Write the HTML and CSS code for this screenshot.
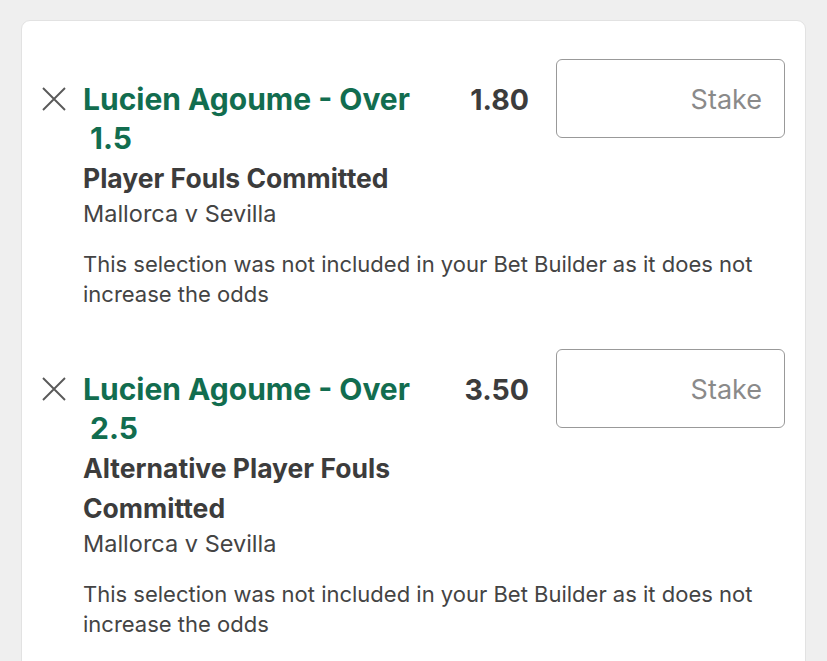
FILE: index.html
```html
<!DOCTYPE html>
<html>
<head>
<meta charset="utf-8">
<link rel="stylesheet" href="styles.css">
</head>
<body>
<div class="card">
  <div class="sel">
    <div class="row">
      <div class="remove"><svg width="24" height="24" viewBox="0 0 24 24"><path d="M1 1 L23 23 M23 1 L1 23" stroke="#595959" stroke-width="1.9" fill="none"/></svg></div>
      <div class="info">
        <div class="title">Lucien Agoume - Over &nbsp;1.5</div>
        <div class="market">Player Fouls Committed</div>
        <div class="event">Mallorca v Sevilla</div>
      </div>
      <div class="odds">1.80</div>
      <div class="stake">Stake</div>
    </div>
    <div class="note">This selection was not included in your Bet Builder as it does not increase the odds</div>
  </div>
  <div class="sel">
    <div class="row">
      <div class="remove"><svg width="24" height="24" viewBox="0 0 24 24"><path d="M1 1 L23 23 M23 1 L1 23" stroke="#595959" stroke-width="1.9" fill="none"/></svg></div>
      <div class="info">
        <div class="title">Lucien Agoume - Over &nbsp;2.5</div>
        <div class="market">Alternative Player Fouls Committed</div>
        <div class="event">Mallorca v Sevilla</div>
      </div>
      <div class="odds">3.50</div>
      <div class="stake">Stake</div>
    </div>
    <div class="note">This selection was not included in your Bet Builder as it does not increase the odds</div>
  </div>
</div>
</body>
</html>
```
FILE: styles.css
```css
html, body {
  margin: 0;
  padding: 0;
  background: #efefef;
  height: 100%;
  overflow: hidden;
}
body {
  font-family: Inter, "Liberation Sans", sans-serif;
  color: #3c3c3c;
}
.card {
  margin: 20px 0 0 21px;
  width: 785px;
  min-height: 700px;
  background: #fff;
  border: 1px solid #e2e2e2;
  border-radius: 9px;
  padding-top: 38px;
  box-sizing: border-box;
}
.sel {
  padding: 0 0 40px 18px;
}
.row {
  display: flex;
  align-items: flex-start;
}
.remove {
  width: 24px;
  margin: 28px 17px 0 2px;
  flex: none;
  display: flex;
}
.info {
  width: 360px;
  flex: none;
  padding-top: 21px;
}
.title {
  color: #126d4f;
  font-weight: 700;
  font-size: 30px;
  line-height: 39px;
}
.market {
  font-weight: 700;
  font-size: 26.5px;
  line-height: 40px;
  color: #3c3c3c;
}
.event {
  font-size: 23.5px;
  line-height: 32px;
  color: #444;
}
.odds {
  width: 86px;
  flex: none;
  text-align: right;
  font-weight: 700;
  font-size: 28.5px;
  line-height: 39px;
  padding-top: 21px;
  color: #3c3c3c;
}
.stake {
  margin-left: 27px;
  width: 229px;
  height: 79px;
  box-sizing: border-box;
  border: 1.5px solid #999;
  border-radius: 6px;
  flex: none;
  display: flex;
  align-items: center;
  justify-content: flex-end;
  padding: 2px 22px 0 0;
  font-size: 27px;
  color: #8a8a8a;
}
.note {
  margin: 19px 0 0 43px;
  width: 700px;
  font-size: 22px;
  line-height: 30px;
  color: #444;
}
```
